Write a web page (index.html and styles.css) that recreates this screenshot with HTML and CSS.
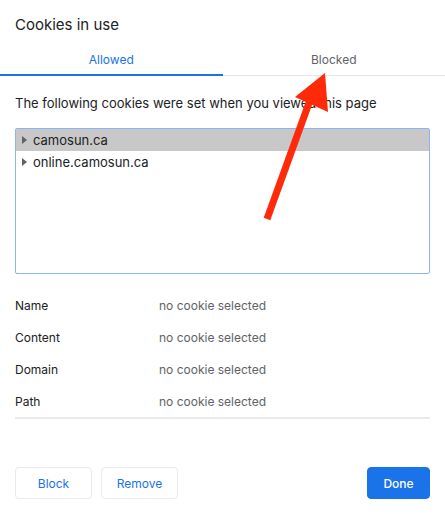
FILE: index.html
```html
<!DOCTYPE html>
<html>
<head>
<meta charset="utf-8">
<link rel="stylesheet" href="styles.css">
</head>
<body>
<div class="dialog">
  <h1 class="title">Cookies in use</h1>
  <div class="tabs">
    <div class="tab active">Allowed</div>
    <div class="tab">Blocked</div>
  </div>
  <p class="intro">The following cookies were set when you viewed this page</p>
  <div class="tree">
    <div class="node selected"><span class="caret"></span>camosun.ca</div>
    <div class="node"><span class="caret"></span>online.camosun.ca</div>
  </div>
  <div class="details">
    <div class="row"><span class="label">Name</span><span class="value">no cookie selected</span></div>
    <div class="row"><span class="label">Content</span><span class="value">no cookie selected</span></div>
    <div class="row"><span class="label">Domain</span><span class="value">no cookie selected</span></div>
    <div class="row"><span class="label">Path</span><span class="value">no cookie selected</span></div>
  </div>
  <div class="footer">
    <button class="btn">Block</button>
    <button class="btn">Remove</button>
    <span class="spacer"></span>
    <button class="btn primary">Done</button>
  </div>
  <svg class="arrow" width="445" height="514" viewBox="0 0 445 514">
    <line x1="267" y1="219" x2="309" y2="103" stroke="#ff2a0a" stroke-width="7"/>
    <polygon points="325,73 295,97 328,112" fill="#ff2a0a"/>
  </svg>
</div>
</body>
</html>
```
FILE: styles.css
```css
* { box-sizing: border-box; }
html, body { margin: 0; padding: 0; background: #fff; }
body {
  font-family: Inter, "Noto Sans", sans-serif;
  font-size: 13px;
  color: #202124;
  width: 445px;
  height: 514px;
  overflow: hidden;
}
.dialog { position: relative; width: 445px; height: 514px; }
.title {
  margin: 0;
  padding: 15px 15px 0;
  font-size: 15px;
  font-weight: 400;
  line-height: 20px;
  height: 45px;
}
.tabs {
  display: flex;
  height: 31px;
  border-bottom: 1px solid #e4e5e8;
  font-size: 12px;
}
.tab {
  flex: 1;
  text-align: center;
  color: #5f6368;
  line-height: 30px;
}
.tab.active {
  color: #1a73e8;
  border-bottom: 2px solid #1a73e8;
  margin-bottom: -1px;
}
.intro {
  margin: 0;
  padding: 18px 15px 0;
  line-height: 18px;
  height: 52px;
}
.tree {
  margin: 0 15px;
  height: 146px;
  border: 1px solid #8ab4f8;
  border-radius: 2px;
}
.node {
  display: flex;
  align-items: center;
  height: 22px;
  padding-left: 6px;
}
.node.selected { background: #c8c8c8; }
.caret {
  width: 0; height: 0;
  border-top: 4px solid transparent;
  border-bottom: 4px solid transparent;
  border-left: 5px solid #5f6368;
  margin-right: 6px;
}
.details {
  margin: 15px 15px 0;
  border-bottom: 2px solid #e8eaed;
  font-size: 12px;
}
.row { display: flex; height: 32px; align-items: center; }
.label { width: 144px; }
.value { color: #5f6368; }
.footer {
  display: flex;
  padding: 48px 15px 0;
  gap: 9px;
}
.spacer { flex: 1; }
.btn {
  font-family: inherit;
  font-size: 12px;
  height: 32px;
  width: 77px;
  padding: 0;
  background: #fff;
  color: #1a73e8;
  border: 1px solid #e8eaed;
  border-radius: 4px;
}
.btn.primary {
  width: 63px;
  background: #1a73e8;
  color: #fff;
  border-color: #1a73e8;
  font-weight: 500;
}
.arrow { position: absolute; left: 0; top: 0; pointer-events: none; }
```
